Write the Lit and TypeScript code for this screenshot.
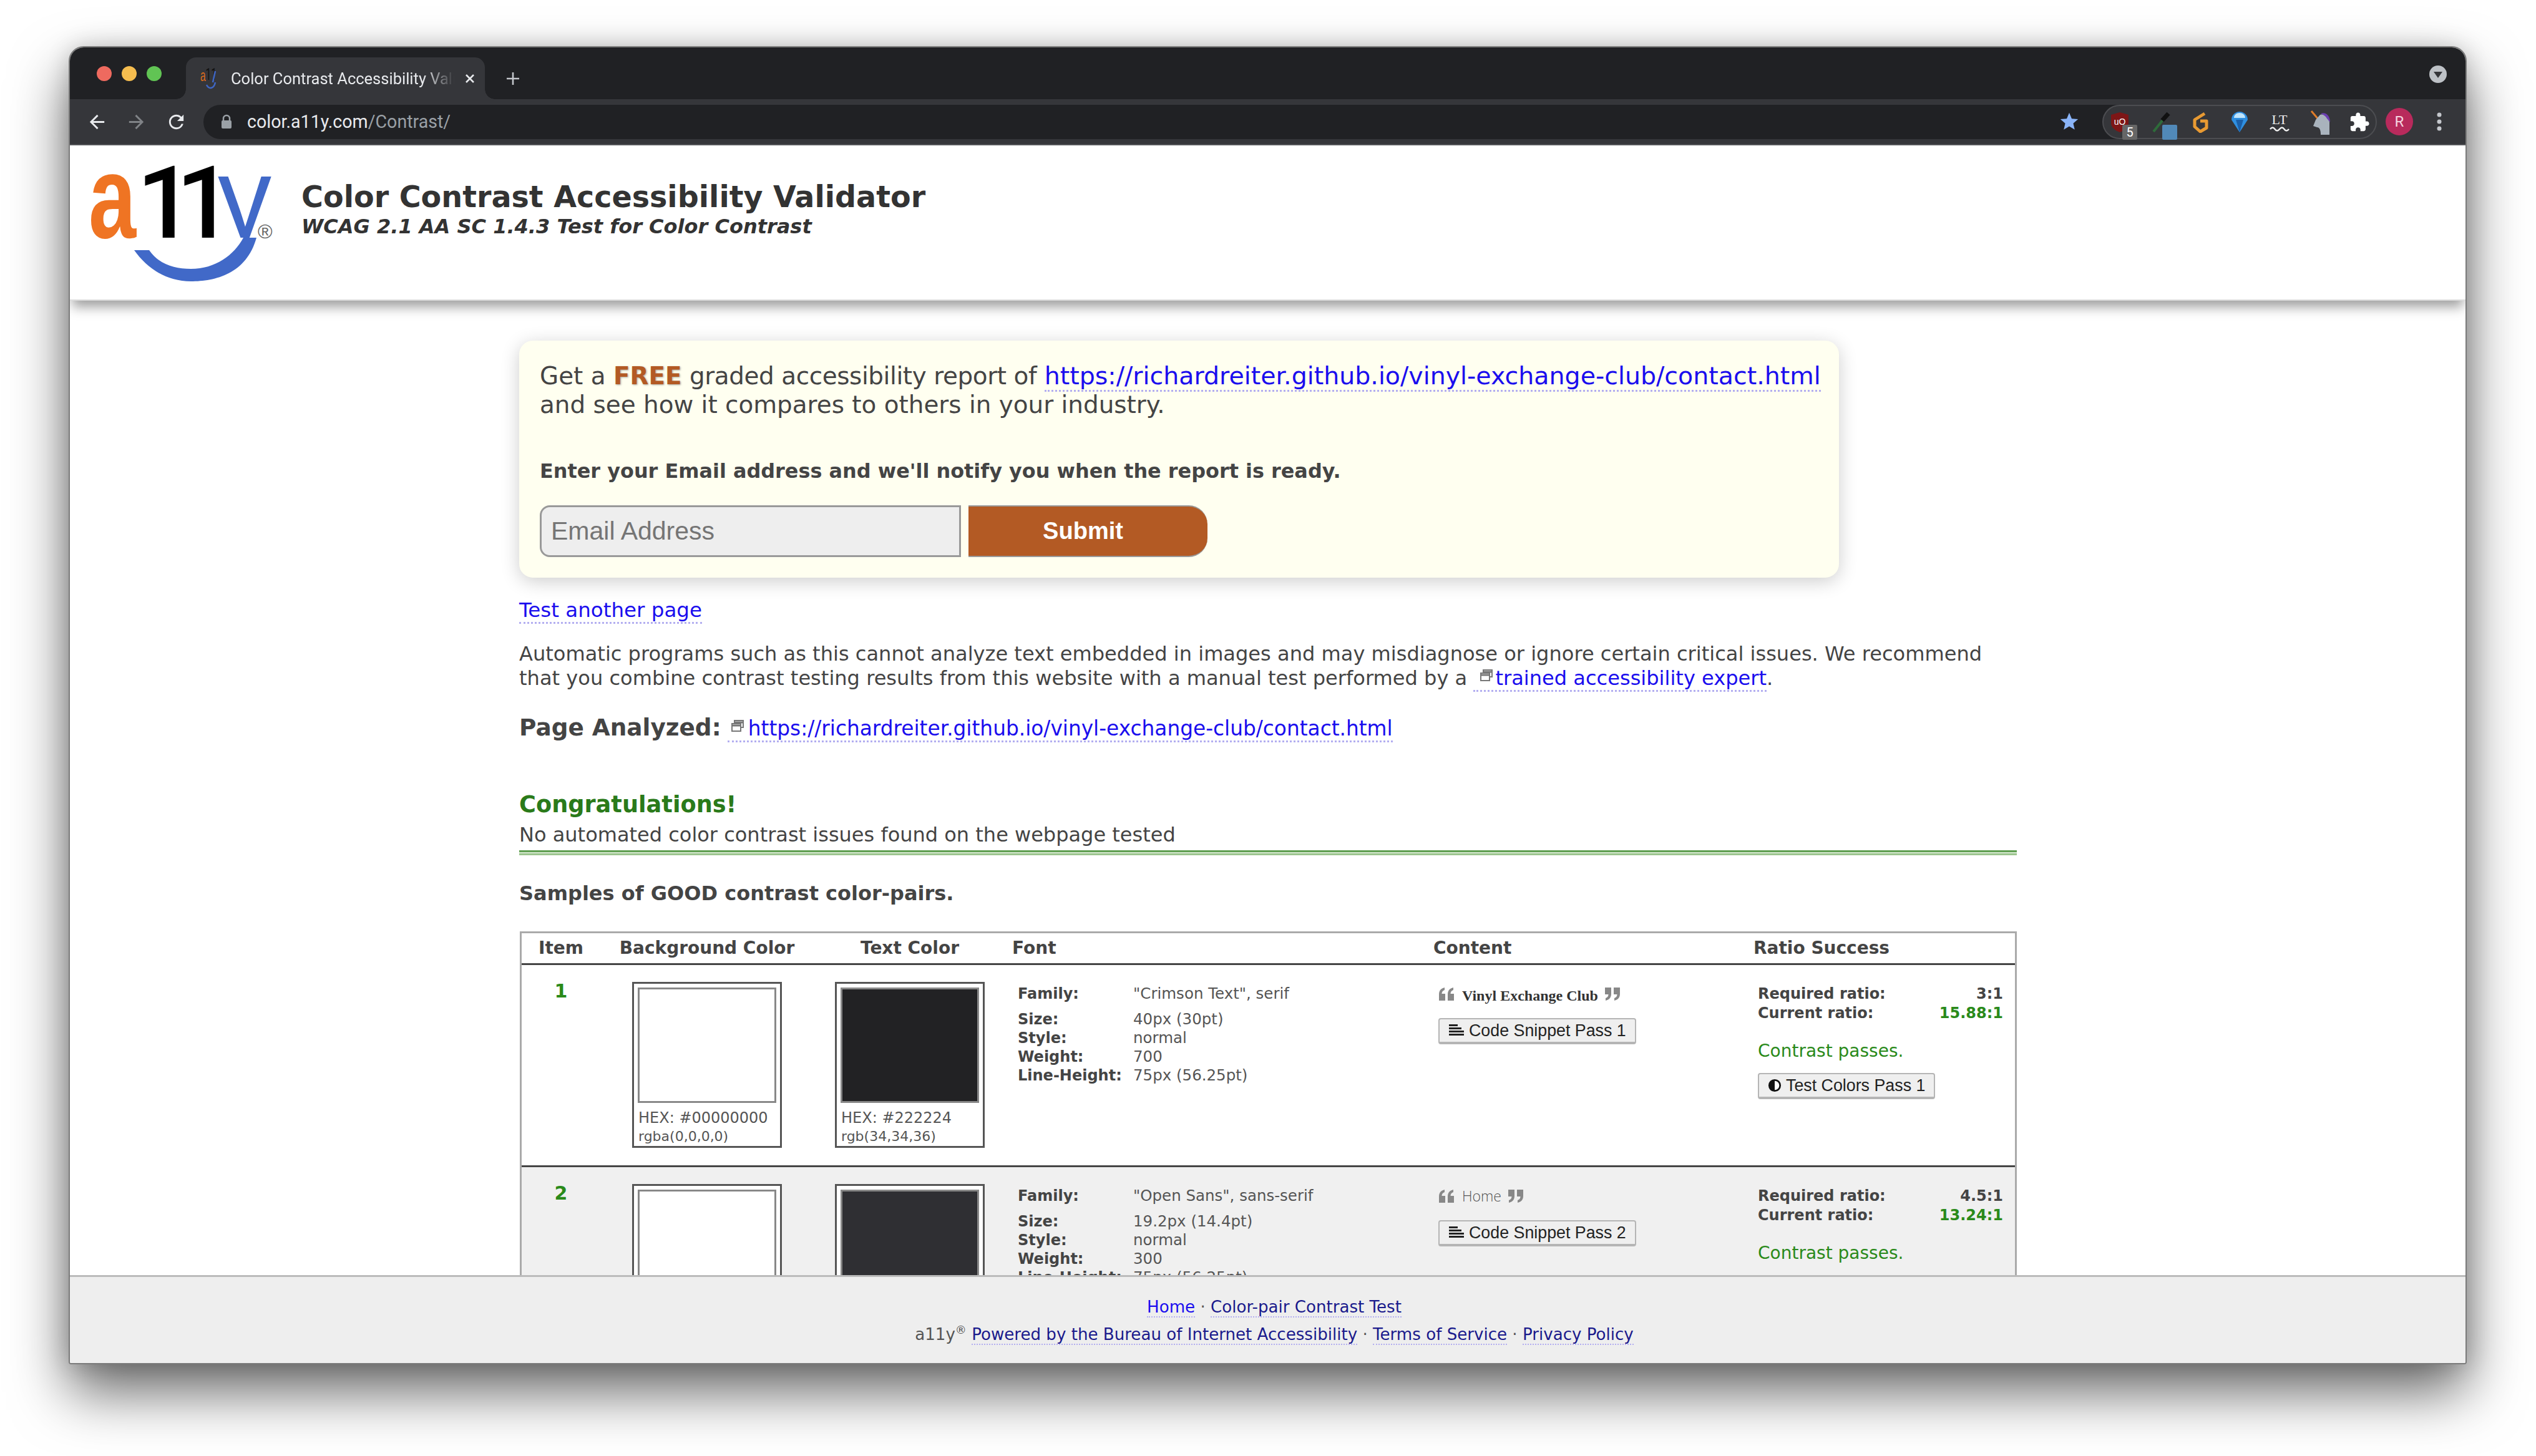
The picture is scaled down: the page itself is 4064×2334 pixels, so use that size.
import { LitElement, html, css, svg } from "lit";
import { customElement } from "lit/decorators.js";

const quoteLeft = svg`<path d="M1 21V11C1 5 4 1.500 10 0v4C7 5 5.500 7 5.500 10H11v11H1zM15 21V11c0-6 3-9.500 9-11v4c-3 1-4.500 3-4.500 6H25v11H15z"/>`;
const quoteRight = svg`<path d="M11 0v10c0 6-3 9.500-9 11v-4c3-1 4.500-3 4.500-6H1V0h10zM25 0v10c0 6-3 9.500-9 11v-4c3-1 4.500-3 4.500-6H15V0h10z"/>`;

const rows = [
  {
    n: "1", bg: "transparent", hex1: "#00000000", rgb1: "rgba(0,0,0,0)", fg: "#222224", hex2: "#222224", rgb2: "rgb(34,34,36)",
    family: '"Crimson Text", serif', size: "40px (30pt)", weight: "700",
    content: "Vinyl Exchange Club", serif: true, req: "3:1", cur: "15.88:1",
  },
  {
    n: "2", bg: "#ffffff", hex1: "#FFFFFF", rgb1: "rgb(255,255,255)", fg: "#2f2f33", hex2: "#2F2F33", rgb2: "rgb(47,47,51)",
    family: '"Open Sans", sans-serif', size: "19.2px (14.4pt)", weight: "300",
    content: "Home", serif: false, req: "4.5:1", cur: "13.24:1",
  },
];

@customElement("browser-bar")
export class BrowserBar extends LitElement {
  static styles = css`
    :host { display: block; font-family: Roboto, "Liberation Sans", sans-serif; }
    .strip { height: 83px; background: #202124; display: flex; align-items: flex-end; padding-left: 43px; position: relative; }
    .lights { display: flex; gap: 16px; align-self: flex-start; margin-top: 30px; width: 143px; }
    .lights i { width: 24px; height: 24px; border-radius: 50%; }
    .tab { width: 479px; height: 67px; background: #35363a; border-radius: 16px 16px 0 0; display: flex; align-items: center; color: #e8eaed; font-size: 25.500px; position: relative; box-sizing: border-box; padding-left: 23px; }
    .tab::before, .tab::after { content: ""; position: absolute; bottom: 0; width: 16px; height: 16px; }
    .tab::before { left: -16px; background: radial-gradient(circle at 0 0, #202124 15.500px, #35363a 16px); }
    .tab::after { right: -16px; background: radial-gradient(circle at 100% 0, #202124 15.500px, #35363a 16px); }
    .fav { width: 34px; height: 40px; margin-right: 15px; flex: none; }
    .title { width: 358px; white-space: nowrap; overflow: hidden; -webkit-mask-image: linear-gradient(90deg, #000 86%, transparent); mask-image: linear-gradient(90deg, #000 86%, transparent); }
    .close { width: 18px; height: 18px; margin-left: 16px; flex: none; }
    .plus { width: 24px; height: 24px; margin: 0 0 21px 33px; }
    .caret { position: absolute; right: 30px; top: 29px; width: 28px; height: 28px; }
    .tools { height: 74px; background: #35363a; display: flex; align-items: center; border-bottom: 2px solid #55565a; box-sizing: border-box; }
    .nav { width: 35px; height: 35px; fill: #e8eaed; flex: none; }
    .nav.back { margin-left: 26px; }
    .nav.fwd { margin-left: 28px; fill: #808387; }
    .nav.reload { margin-left: 29px; }
    .url { margin-left: 26px; width: 3344px; height: 55px; border-radius: 28px; background: #202124; display: flex; align-items: center; box-sizing: border-box; padding-left: 28px; color: #e8eaed; font-size: 28.600px; position: relative; }
    .url svg.lock { width: 18px; height: 24px; margin-right: 24px; }
    .url span { color: #9aa0a6; }
    .url svg.star { position: absolute; right: 337px; width: 34px; height: 34px; }
    .ext { width: 440px; height: 55px; box-sizing: border-box; border: 2px solid #4c4d51; border-radius: 28px; background: #35363a; position: relative; margin-left: -301px; flex: none; }
    .ico { position: absolute; top: 9px; width: 34px; height: 34px; }
    .badge { position: absolute; top: 30px; width: 24px; height: 24px; border-radius: 2px; font: 20px/24px Roboto, sans-serif; text-align: center; color: #fff; }
    .avatar { width: 44px; height: 44px; border-radius: 50%; background: #b82a5c; color: #f5d5e0; text-align: center; font-size: 24px; line-height: 44px; margin-left: 14px; flex: none; }
    .dots { width: 8px; height: 30px; margin-left: 38px; flex: none; }
  `;

  render() {
    return html`
      <div class="strip">
        <div class="lights">
          <i style="background:#ee6a5f"></i><i style="background:#f5bd4f"></i><i style="background:#61c454"></i>
        </div>
        <div class="tab">
          <svg class="fav" viewBox="0 0 34 40">
            <text x="0" y="24" font-family="Liberation Sans" font-size="26" fill="#d96a1e" transform="scale(.6 1)">a</text>
            <text x="14" y="22" font-family="Roboto" font-size="26" fill="#111" transform="scale(.6 1)">11</text>
            <path d="M24 8l-4 18M10 30c4 8 12 6 14-4" fill="none" stroke="#3f66c4" stroke-width="2.500"/>
          </svg>
          <div class="title">Color Contrast Accessibility Validator</div>
          <svg class="close" viewBox="0 0 18 18"><path d="M3 3l12 12M15 3L3 15" stroke="#e8eaed" stroke-width="2.600"/></svg>
        </div>
        <svg class="plus" viewBox="0 0 24 24"><path d="M12 2v20M2 12h20" stroke="#c4c7cc" stroke-width="2.600"/></svg>
        <svg class="caret" viewBox="0 0 28 28"><circle cx="14" cy="14" r="14" fill="#bdc1c6"/><path d="M7 10h14l-7 10z" fill="#35363a"/></svg>
      </div>
      <div class="tools">
        <svg class="nav back" viewBox="0 0 24 24"><path d="M20 11H7.830l5.590-5.590L12 4l-8 8 8 8 1.410-1.410L7.830 13H20v-2z"/></svg>
        <svg class="nav fwd" viewBox="0 0 24 24"><path d="M4 11h12.170l-5.590-5.590L12 4l8 8-8 8-1.410-1.410L16.170 13H4v-2z"/></svg>
        <svg class="nav reload" viewBox="0 0 24 24"><path d="M17.650 6.350A7.958 7.958 0 0012 4c-4.420 0-7.990 3.580-7.990 8s3.570 8 7.990 8c3.730 0 6.840-2.550 7.730-6h-2.080A5.990 5.990 0 0112 18c-3.310 0-6-2.690-6-6s2.690-6 6-6c1.660 0 3.140.69 4.220 1.780L13 11h7V4l-2.350 2.350z"/></svg>
        <div class="url">
          <svg class="lock" viewBox="0 0 18 24"><path d="M4 11V7a5 5 0 0110 0v4" fill="none" stroke="#9aa0a6" stroke-width="2.500"/><rect x="1" y="10" width="16" height="13" rx="2" fill="#9aa0a6"/></svg>
          color.a11y.com<span>/Contrast/</span>
          <svg class="star" viewBox="0 0 24 24" fill="#8ab4f8"><path d="M12 17.270L18.180 21l-1.640-7.030L22 9.240l-7.190-.61L12 2 9.190 8.630 2 9.240l5.460 4.730L5.820 21z"/></svg>
        </div>
        ${this.extensions()}
      </div>
    `;
  }

  private extensions() {
    return html`
      <div class="ext">
        <svg class="ico" style="left:9px" viewBox="0 0 34 34"><path d="M17 1l14 4v13c0 7-6 12-14 15C9 30 3 25 3 18V5z" fill="#7d1616"/><text x="17" y="21" text-anchor="middle" font-family="Liberation Sans" font-size="14" fill="#fff">uO</text></svg>
        <div class="badge" style="left:30px;background:#666">5</div>
        <svg class="ico" style="left:74px" viewBox="0 0 34 34"><path d="M6 32L22 12" stroke="#2e6b3a" stroke-width="4"/><path d="M20 14L30 3" stroke="#111" stroke-width="7"/></svg>
        <div class="badge" style="left:94px;background:#5189b8"></div>
        <svg class="ico" style="left:138px" viewBox="0 0 34 34"><path d="M24 3L8 13v11l9 8 10-6V15H17" fill="none" stroke="#e89a32" stroke-width="5" stroke-linejoin="round"/></svg>
        <svg class="ico" style="left:201px" viewBox="0 0 34 34"><path d="M17 33L4 13a11 11 0 0126 0z" fill="#2f8fe0"/><path d="M17 2c5 0 9 3 9 8H8c0-5 4-8 9-8z" fill="#bfe4fb"/><path d="M17 33l-6-20h12z" fill="#1b5fa8"/></svg>
        <svg class="ico" style="left:265px" viewBox="0 0 34 34"><text x="17" y="20" text-anchor="middle" font-family="Liberation Serif" font-size="22" fill="#eee">LT</text><path d="M2 28q4-5 7.500 0t7.500 0 7.500 0 7.500 0" fill="none" stroke="#eee" stroke-width="2.400"/></svg>
        <svg class="ico" style="left:331px;top:6px;height:42px" viewBox="0 0 34 42"><path d="M2 2l11 13" stroke="#e07d2a" stroke-width="3"/><path d="M16 8c8-2 14 3 15 12v20H17c0-8-2-12-6-12l-6-2 4-10z" fill="#a9b3bd"/><path d="M17 6c8-3 15 3 15 14l-5-6c-2-4-6-6-10-8z" fill="#6b3fb0"/></svg>
        <svg class="ico" style="left:393px" viewBox="0 0 24 24" fill="#fff"><path d="M20.500 11H19V7c0-1.100-.9-2-2-2h-4V3.500C13 2.120 11.880 1 10.500 1S8 2.120 8 3.500V5H4c-1.100 0-1.990.9-1.990 2v3.800H3.500c1.490 0 2.700 1.210 2.700 2.700s-1.210 2.700-2.700 2.700H2V20c0 1.100.9 2 2 2h3.800v-1.500c0-1.490 1.210-2.700 2.700-2.700 1.490 0 2.700 1.210 2.700 2.700V22H17c1.100 0 2-.9 2-2v-4h1.500c1.380 0 2.500-1.120 2.500-2.500S21.880 11 20.500 11z"/></svg>
      </div>
      <div class="avatar">R</div>
      <svg class="dots" viewBox="0 0 8 30" fill="#c4c7cc"><circle cx="4" cy="4" r="3.500"/><circle cx="4" cy="15" r="3.500"/><circle cx="4" cy="26" r="3.500"/></svg>
    `;
  }
}

@customElement("app-root")
export class AppRoot extends LitElement {
  static styles = css`
    :host { display: block; width: 4064px; height: 2334px; background: #fff; overflow: hidden; font-family: "DejaVu Sans", Verdana, sans-serif; color: #444; }
    * { box-sizing: border-box; }
    a { color: #1a0dee; text-decoration: none; border-bottom: 3px dotted #b3aef0; }
    .desk { padding: 74px 0 0 110px; }
    .win { width: 3843px; height: 2113px; border-radius: 24px 24px 4px 4px; overflow: hidden; display: flex; flex-direction: column; border: 2px solid #7a7a7a; box-shadow: 0 44px 90px rgba(0,0,0,.6), 0 0 36px rgba(0,0,0,.16); background: #fff; }
    .page { flex: 1; overflow: hidden; position: relative; min-height: 0; }
    .head { height: 249px; display: flex; box-shadow: 0 14px 18px -4px rgba(0,0,0,.38); border-bottom: 2px solid #ddd; background: #fff; position: relative; }
    .logo { width: 310px; height: 205px; margin: 21px 0 0 23px; flex: none; }
    .names { margin: 55px 0 0 38px; }
    h1 { margin: 0; font-size: 47.600px; line-height: 56px; font-weight: 700; color: #333; }
    .sub { font-size: 32px; line-height: 40px; font-weight: 700; font-style: italic; margin-top: -1px; color: #333; }
    .col { width: 2400px; margin-left: 720px; }
    .card { width: 2115px; height: 380px; margin-top: 64px; background: #fffff0; border-radius: 22px; padding: 33px 33px 0; box-shadow: 0 6px 30px rgba(0,0,0,.2); }
    .lead { font-size: 38.900px; line-height: 46px; color: #444; white-space: nowrap; }
    .lead a { font-size: 39.500px; }
    .tight { letter-spacing: -.4px; }
    .free { color: #b35a24; font-weight: 700; text-shadow: 1px 1px 3px rgba(0,0,0,.35); }
    .enter { font-size: 31.900px; line-height: 38px; font-weight: 700; margin-top: 64px; }
    .form { display: flex; gap: 12px; margin-top: 36px; font-family: "Liberation Sans", Arial, sans-serif; }
    .input { width: 675px; height: 83px; background: #eee; border: 3px solid #999; border-radius: 16px 0 0 16px; font-size: 41px; line-height: 77px; padding-left: 15px; color: #757575; }
    .submit { width: 383px; height: 83px; background: #b35a24; border-radius: 0 30px 30px 0; border: 0; border-top: 2px solid #999; border-bottom: 2px solid #999; color: #fff; font: 700 38px/79px "Liberation Sans", Arial, sans-serif; text-align: center; padding-right: 16px; }
    .txt { font-size: 32px; line-height: 38px; }
    .another { margin-top: 33px; font-size: 32.500px; }
    .auto { font-size: 32.070px; line-height: 39px; margin-top: 32px; width: 2360px; }
    .ext-ico { width: 22px; height: 22px; vertical-align: 4px; margin: 0 3px 0 10px; }
    .analyzed { margin-top: 36px; line-height: 46px; }
    .analyzed a { font-size: 32.800px; }
    .analyzed .ext-ico { margin: 0 6px 0 5px; }
    .analyzed b { font-size: 37.400px; }
    .cong { margin-top: 76px; font-size: 36.700px; line-height: 46px; font-weight: 700; color: #2a7a1a; }
    .none { margin-top: 6px; }
    .rule { height: 8px; margin-top: 6px; background: linear-gradient(#5f9e50 0 3px, #d6e8d0 3px 5px, #9cc58f 5px); }
    .samples { margin-top: 42px; font-weight: 700; }
    .table { margin-top: 42px; margin-left: 1px; width: 2399px; border: solid #aaa; border-width: 3px 3px 0; }
    .grid { display: grid; grid-template-columns: 129px 336px 314px 675px 513px 426px; }
    .th { height: 51px; border-bottom: 3px solid #444; font-size: 28px; line-height: 48px; font-weight: 700; color: #444; }
    .th div { padding-left: 7px; }
    .th .c { text-align: center; padding: 0; }
    .th .c:first-child, .num { padding-right: 3px; }
    .row { height: 324px; border-bottom: 3px solid #444; font-size: 24px; color: #555; }
    .row.alt { background: #f0f0f0; }
    .num { font-size: 30px; line-height: 36px; font-weight: 700; color: #2a8a1a; text-align: center; padding-top: 24px; }
    .swatch { width: 240px; height: 266px; margin: 27px auto 0; border: 3px solid #555; background: #fff; padding: 6px 6px 0; font-size: 24px; line-height: 31px; color: #555; }
    .chip { height: 185px; border: 3px solid #888; margin-bottom: 9px; }
    .chip + div { padding-left: 1px; }
    .rgb { font-size: 22px; padding-left: 1px; margin-top: -2px; }
    .font { padding: 31px 0 0 16px; display: grid; grid-template-columns: 185px 1fr; grid-template-rows: 41px repeat(4, 30px); line-height: 30px; }
    .font b { color: #444; }
    .font span { font-size: 24.500px; }
    .cnt { padding: 31px 0 0 15px; }
    .quote { display: flex; align-items: center; height: 30px; color: #555; }
    .quote svg { width: 26px; height: 21px; fill: #888; flex: none; }
    .quote span { margin: 0 10px 0 12px; font-size: 23px; }
    .quote .serif { font: 700 24px "Liberation Serif", serif; color: #333; margin-top: 6px; }
    .quote .light { font-family: "Open Sans", sans-serif; font-weight: 300; color: #555; }
    .btn { display: inline-flex; align-items: center; height: 42px; margin-top: 24px; border: 2px solid #b5b5b5; border-bottom-width: 4px; border-radius: 4px; background: #efefef; font: 26.800px "Liberation Sans", Arial, sans-serif; color: #222; padding: 0 14px 0 14px; gap: 7px; white-space: nowrap; }
    .btn svg { width: 26px; height: 24px; flex: none; }
    .ratio { padding: 31px 19px 0 14px; }
    .ratio .ln { display: flex; justify-content: space-between; line-height: 31px; font-weight: 700; color: #444; }
    .ok { color: #2a8a1a; }
    .pass { font-size: 28px; line-height: 34px; margin-top: 28px; color: #2a8a1a; }
    .ratio .btn { margin-top: 18px; }
    .foot { height: 141px; background: #eee; border-top: 3px solid #bbb; text-align: center; padding: 26px 0 0 21px; font-size: 26.100px; line-height: 44px; color: #555; flex: none; }
    .foot a { color: #1a1a8c; border-bottom-width: 2px; }
    .foot a.on { color: #1a0dee; }
    sup { font-size: 18px; line-height: 0; }
  `;

  render() {
    return html`
      <div class="desk">
        <div class="win">
          <browser-bar></browser-bar>
          <div class="page">
            <div class="head">
              ${this.logo()}
              <div class="names">
                <h1>Color Contrast Accessibility Validator</h1>
                <div class="sub">WCAG 2.1 AA SC 1.4.3 Test for Color Contrast</div>
              </div>
            </div>
            <div class="col">
              <div class="card">
                <div class="lead">Get a <span class="free">FREE</span> <span class="tight">graded accessibility report of</span> <a href="#">https://richardreiter.github.io/vinyl-exchange-club/contact.html</a><br>and see how it compares to others in your industry.</div>
                <div class="enter">Enter your Email address and we'll notify you when the report is ready.</div>
                <div class="form">
                  <div class="input">Email Address</div>
                  <div class="submit">Submit</div>
                </div>
              </div>
              <div class="txt another"><a href="#">Test another page</a></div>
              <div class="txt auto">Automatic programs such as this cannot analyze text embedded in images and may misdiagnose or ignore certain critical issues. We recommend that you combine contrast testing results from this website with a manual test performed by a <a href="#">${this.extIco()}trained accessibility expert</a>.</div>
              <div class="txt analyzed"><b>Page Analyzed:</b> <a href="#">${this.extIco()}https://richardreiter.github.io/vinyl-exchange-club/contact.html</a></div>
              <div class="cong">Congratulations!</div>
              <div class="txt none">No automated color contrast issues found on the webpage tested</div>
              <div class="rule"></div>
              <div class="txt samples">Samples of GOOD contrast color-pairs.</div>
              <div class="table">
                <div class="grid th">
                  <div class="c">Item</div><div class="c">Background Color</div><div class="c">Text Color</div>
                  <div>Font</div><div>Content</div><div>Ratio Success</div>
                </div>
                ${rows.map((r, i) => this.row(r, i))}
              </div>
            </div>
          </div>
          <div class="foot">
            <a class="on" href="#">Home</a> · <a href="#">Color-pair Contrast Test</a><br>
            a11y<sup>®</sup> <a href="#">Powered by the Bureau of Internet Accessibility</a> · <a href="#">Terms of Service</a> · <a href="#">Privacy Policy</a>
          </div>
        </div>
      </div>
    `;
  }

  private row(r: (typeof rows)[number], i: number) {
    return html`
      <div class="grid row ${i % 2 ? "alt" : ""}">
        <div class="num">${r.n}</div>
        <div class="swatch">
          <div class="chip" style="background:${r.bg}"></div>
          <div>HEX: ${r.hex1}</div><div class="rgb">${r.rgb1}</div>
        </div>
        <div class="swatch">
          <div class="chip" style="background:${r.fg}"></div>
          <div>HEX: ${r.hex2}</div><div class="rgb">${r.rgb2}</div>
        </div>
        <div class="font">
          <b>Family:</b><span>${r.family}</span>
          <b>Size:</b><span>${r.size}</span>
          <b>Style:</b><span>normal</span>
          <b>Weight:</b><span>${r.weight}</span>
          <b>Line-Height:</b><span>75px (56.25pt)</span>
        </div>
        <div class="cnt">
          <div class="quote">
            <svg viewBox="0 0 26 21">${quoteLeft}</svg>
            <span class="${r.serif ? "serif" : "light"}">${r.content}</span>
            <svg viewBox="0 0 26 21">${quoteRight}</svg>
          </div>
          <div class="btn">
            <svg viewBox="0 0 26 24"><path d="M1 2h14v3H1zM1 7h20v3H1zM1 12h24v3H1zM1 17h24v3H1z" fill="#222"/></svg>
            Code Snippet Pass ${r.n}
          </div>
        </div>
        <div class="ratio">
          <div class="ln"><span>Required ratio:</span><span>${r.req}</span></div>
          <div class="ln"><span>Current ratio:</span><span class="ok">${r.cur}</span></div>
          <div class="pass">Contrast passes.</div>
          <div class="btn">
            <svg viewBox="0 0 24 24" style="width:22px"><circle cx="12" cy="12" r="9.500" fill="#fff" stroke="#111" stroke-width="3"/><path d="M12 2.500a9.500 9.500 0 000 19z" fill="#111"/></svg>
            Test Colors Pass ${r.n}
          </div>
        </div>
      </div>
    `;
  }

  private extIco() {
    return html`<svg class="ext-ico" viewBox="0 0 22 22" fill="none" stroke="#777" stroke-width="2"><rect x="6" y="2" width="14" height="11" fill="#fff"/><path d="M6 5h14" stroke-width="3"/><rect x="2" y="7" width="14" height="12" fill="#fff"/><path d="M2 10h14" stroke-width="3"/></svg>`;
  }

  private logo() {
    return html`<svg class="logo" viewBox="0 0 310 205">
      <defs><clipPath id="above"><rect x="200" y="0" width="110" height="127"/></clipPath></defs>
      <text transform="translate(7 127) scale(.72 1)" font-family="Liberation Sans" font-weight="700" font-size="190" fill="#ef7423">a</text>
      <text transform="translate(84 127)" font-family="Roboto" font-weight="500" font-size="162" fill="#000" letter-spacing="-29">11</text>
      <g clip-path="url(#above)"><text transform="translate(214 127) scale(.93 1)" font-family="Liberation Sans" font-size="185" fill="#4169c8">y</text></g>
      <path d="M276 127C260 185 210 197 171 197C130 197 100 175 80 147L104 147C120 170 145 177 171 177C210 177 240 155 255 127Z" fill="#4169c8"/>
      <text x="278" y="128" font-family="Liberation Sans" font-size="32" fill="#666">®</text>
    </svg>`;
  }
}
